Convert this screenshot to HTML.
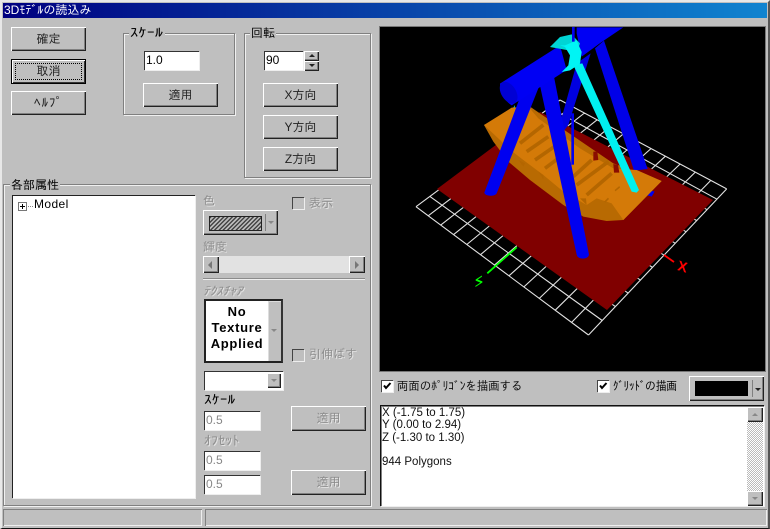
<!DOCTYPE html>
<html lang="ja"><head><meta charset="utf-8"><title>3Dモデルの読込み</title>
<style>
html,body{margin:0;padding:0;background:#bfbfbf;}
#w{position:relative;width:770px;height:529px;overflow:hidden;background:#bfbfbf;font:12px/14px "Liberation Sans","IPAGothic","Noto Sans CJK JP",sans-serif;color:#000;}
#w div{position:absolute;box-sizing:border-box;}
.fr{left:0;top:0;width:770px;height:529px;border-top:2px solid #e8e8e8;border-left:2px solid #e8e8e8;border-right:2px solid #555;border-bottom:1px solid #111;}
.tb{left:3px;top:3px;width:764px;height:15px;background:linear-gradient(90deg,#000080,#1084d0);color:#fff;line-height:15px;padding-left:1px;}
.b{background:#bfbfbf;box-shadow:inset 1px 1px 0 #fff,inset -1px -1px 0 #222,inset -2px -2px 0 #808080;text-align:center;line-height:24px;font-size:12px;color:#222;}
.dis{color:#8a8a8a;text-shadow:1px 1px 0 #e8e8e8;}
.gp{border:1px solid #808080;box-shadow:1px 1px 0 #f0f0f0,inset 1px 1px 0 #f0f0f0;}
.lb{background:#bfbfbf;padding:0 1px;line-height:14px;}
.ed{background:#fff;box-shadow:inset 1px 1px 0 #333,1px 1px 0 #eee;padding-left:2px;line-height:19px;}
.t{white-space:nowrap;line-height:14px;}
.g{color:#8e8e8e;text-shadow:1px 1px 0 #e4e4e4;}
.cb{width:12px;height:12px;box-shadow:inset 1px 1px 0 #444,1px 1px 0 #eee;}
.cw{background:#fff;}
.ar{width:0;height:0;border-left:3px solid transparent;border-right:3px solid transparent;border-top:3px solid #444;}
.ag{border-top-color:#888;}
.sx{transform-origin:0 50%;}
</style></head><body>
<div id="w">
<div class="fr"></div>
<div class="tb">3Dﾓﾃﾞﾙの読込み</div>

<div class="b" style="left:11px;top:27px;width:75px;height:24px">確定</div>
<div class="b" style="left:11px;top:59px;width:75px;height:25px;outline:1px solid #000;outline-offset:-1px;box-shadow:inset 2px 2px 0 #fff,inset -2px -2px 0 #333"><div style="left:4px;top:4px;right:4px;bottom:4px;border:1px dotted #000"></div>取消</div>
<div class="b" style="left:11px;top:91px;width:75px;height:24px;letter-spacing:1px;font-size:13px">ﾍﾙﾌﾟ</div>

<div class="gp" style="left:123px;top:33px;width:112px;height:82px"></div>
<div class="lb" style="left:129px;top:26px;width:36px;height:14px"></div>
<div class="t sx" style="left:130px;top:26px;font-size:13px;transform:scaleX(1.27)">ｽｹｰﾙ</div>
<div class="ed" style="left:144px;top:51px;width:55px;height:19px">1.0</div>
<div class="b" style="left:143px;top:83px;width:75px;height:24px">適用</div>

<div class="gp" style="left:244px;top:33px;width:127px;height:145px"></div>
<div class="lb" style="left:250px;top:26px">回転</div>
<div class="ed" style="left:264px;top:51px;width:39px;height:19px">90</div>
<div class="b" style="left:304px;top:51px;width:15px;height:10px"><div class="ar" style="left:5px;top:3px;border-top:0;border-bottom:3px solid #222"></div></div>
<div class="b" style="left:304px;top:61px;width:15px;height:10px"><div class="ar" style="left:5px;top:3px;border-top-color:#222"></div></div>
<div class="b" style="left:263px;top:83px;width:75px;height:24px">X方向</div>
<div class="b" style="left:263px;top:115px;width:75px;height:24px">Y方向</div>
<div class="b" style="left:263px;top:147px;width:75px;height:24px">Z方向</div>

<div class="gp" style="left:3px;top:184px;width:368px;height:322px"></div>
<div class="lb" style="left:10px;top:178px;font-size:12px">各部属性</div>

<div class="cw" style="left:12px;top:195px;width:183px;height:303px;box-shadow:inset 1px 1px 0 #222,1px 1px 0 #eee"></div>
<div style="left:18px;top:202px;width:9px;height:9px;border:1px solid #777;background:#fff"></div>
<div style="left:20px;top:206px;width:5px;height:1px;background:#000"></div>
<div style="left:22px;top:204px;width:1px;height:5px;background:#000"></div>
<div style="left:28px;top:206px;width:5px;border-top:1px dotted #888"></div>
<div class="t" style="left:34px;top:197px;letter-spacing:.4px">Model</div>

<div class="t g" style="left:203px;top:194px">色</div>
<div class="b" style="left:203px;top:210px;width:75px;height:25px"></div>
<div style="left:209px;top:216px;width:53px;height:15px;border:1px solid #222;background:repeating-linear-gradient(135deg,#444 0 1.4px,#bbb 1.4px 3px)"></div>
<div style="left:265px;top:214px;width:1px;height:17px;background:#808080"></div>
<div class="ar ag" style="left:268px;top:221px"></div>
<div class="cb" style="left:292px;top:197px"></div>
<div class="t g" style="left:309px;top:196px;font-size:12px">表示</div>

<div class="t g" style="left:203px;top:240px">輝度</div>
<div style="left:203px;top:256px;width:162px;height:17px;background:#e2e2e2"></div>
<div class="b" style="left:203px;top:256px;width:16px;height:17px"><div style="left:5px;top:5px;width:0;height:0;border-top:4px solid transparent;border-bottom:4px solid transparent;border-right:4px solid #777"></div></div>
<div class="b" style="left:349px;top:256px;width:16px;height:17px"><div style="left:6px;top:5px;width:0;height:0;border-top:4px solid transparent;border-bottom:4px solid transparent;border-left:4px solid #777"></div></div>
<div style="left:203px;top:278px;width:162px;height:2px;background:#8c8c8c;border-bottom:1px solid #eee"></div>
<div class="t g sx" style="left:203px;top:284px;font-size:12px;font-style:italic;transform:scaleX(1.1)">ﾃｸｽﾁｬｱ</div>

<div class="cw" style="left:204px;top:299px;width:79px;height:64px;border:2px solid #222;border-right-color:#333"></div>
<div class="b" style="left:268px;top:301px;width:13px;height:60px;box-shadow:inset 1px 1px 0 #ddd"><div class="ar ag" style="left:3px;top:28px"></div></div>
<div class="t" style="left:206px;top:304px;width:62px;text-align:center;font-weight:bold;font-size:13px;letter-spacing:.7px;line-height:16px">No<br>Texture<br>Applied</div>
<div class="cb" style="left:292px;top:349px"></div>
<div class="t g" style="left:309px;top:347px;font-size:12px">引伸ばす</div>

<div class="ed" style="left:204px;top:371px;width:79px;height:19px"></div>
<div class="b" style="left:267px;top:373px;width:14px;height:15px"><div class="ar ag" style="left:4px;top:6px"></div></div>
<div class="t sx" style="left:204px;top:393px;font-size:13px;transform:scaleX(1.2)">ｽｹｰﾙ</div>
<div class="ed" style="left:204px;top:411px;width:56px;height:19px;color:#888">0.5</div>
<div class="b dis" style="left:291px;top:406px;width:75px;height:25px">適用</div>
<div class="t g sx" style="left:204px;top:434px;font-size:13px;transform:scaleX(1.08)">ｵﾌｾｯﾄ</div>
<div class="ed" style="left:204px;top:451px;width:56px;height:19px;color:#888">0.5</div>
<div class="ed" style="left:204px;top:475px;width:56px;height:19px;color:#888">0.5</div>
<div class="b dis" style="left:291px;top:470px;width:75px;height:25px">適用</div>

<div style="left:379px;top:26px;width:387px;height:346px;background:#000;box-shadow:inset 0 0 0 1px #777"></div>
<svg style="position:absolute;left:380px;top:27px" width="385" height="344" viewBox="380 27 385 344" xmlns="http://www.w3.org/2000/svg">
<path fill="none" stroke="#e2e2e2" stroke-width="1.1" d="M416 206.7L560 100M428.2 215.8L572.1 106.4M440.7 225.1L584.5 113M453.6 234.6L597.1 119.8M466.8 244.5L610.1 126.7M480.5 254.7L623.4 133.8M494.5 265.1L637.1 141.1M509 275.8L651.1 148.5M523.9 286.9L665.4 156.2M539.3 298.4L680.1 164M555.2 310.2L695.3 172.1M571.6 322.4L710.8 180.4M588.5 335L726.7 188.9M416 206.7L588.5 335M429.9 196.4L602.2 320.5M443.3 186.4L615.4 306.6M456.4 176.7L628.1 293.1M469.2 167.3L640.5 280.1M481.6 158.1L652.5 267.4M493.7 149.1L664.1 255.2M505.5 140.4L675.3 243.3M516.9 131.9L686.2 231.8M528.1 123.6L696.8 220.6M539 115.5L707.1 209.7M549.6 107.7L717 199.2M560 100L726.7 188.9"/>
<path fill="#800000" d="M437 189L540 112L713 200L607 310Z"/>
<path fill="none" stroke="#00ff00" stroke-width="1.8" d="M516.7 247.3L487.3 273.3"/>
<text transform="matrix(-1.26 .82 0 1.06 482.7 282.3)" font-family="Liberation Sans" font-weight="bold" font-size="10" fill="#00ff00">Z</text>
<path fill="none" stroke="#ff0000" stroke-width="1.8" d="M664 255L674 262"/>
<text transform="matrix(1 .3 -.2 1 677 270)" font-family="Liberation Sans" font-weight="bold" font-size="14" fill="#ff0000">X</text>
<g transform="translate(380 20) scale(.33333)">
<path fill="#0000e8" d="M645 85L672 62L803 447L762 452Z"/>
<path fill="#0000f0" d="M805 510L824 515L815 530L802 526Z"/>
<path fill="#00d8d8" d="M382 290L405 255L402 285L392 295Z"/>
<path fill="#b86a02" d="M312 315L340 365L385 425L450 480L550 555L610 590L680 603L730 600L845 483L700 430L450 260Z"/>
<path fill="#d47a08" d="M312 315L395 263L445 260L475 295L600 385L700 445L770 450L845 483L730 600L695 550L650 535L620 555L550 515L490 465L430 420L385 385L360 360Z"/>
<g fill="none" stroke="#b46600" stroke-width="11">
<path d="M420 370L490 315"/>
<path d="M440 395L505 350"/>
<path d="M465 420L530 375"/>
<path d="M495 445L555 400"/>
<path d="M580 470L635 420"/>
<path d="M590 495L685 425"/>
<path d="M620 525L695 460"/>
</g>
<g fill="#b46600">
<path d="M415 420L435 430L430 440Z"/>
<path d="M475 455L490 465L490 478Z"/>
<path d="M600 535L620 555L618 535Z"/>
<path d="M704 510L718 498L720 503L706 514Z"/>
<path d="M672 545L684 533L687 537L676 548Z"/>
</g>
<g fill="#8a0d00">
<path d="M640 395L652 395L655 420L640 422Z"/>
<path d="M700 432L714 435L718 458L702 458Z"/>
</g>
<path fill="#0000e0" d="M590 130L632 100L565 315L550 335L537 322Z"/>
<path d="M578 280L578 434" stroke="#0000f0" stroke-width="8" fill="none"/>
<path fill="#00f0f0" d="M580 135L607 130L777 510L770 518L755 515Z"/>
<path fill="#0000f0" d="M432 200L477 200L350 520C345 530 315 530 313 518Z"/>
<path fill="#0000f0" d="M472 160L520 160L627 704C625 720 592 720 590 704Z"/>
<path fill="#0000f4" d="M590 40L590 22L730 22L665 66L605 110Z"/>
<path fill="#0000f4" d="M360 191L540 76L560 150L395 256C375 245 360 215 360 191Z"/>
<ellipse cx="386" cy="218" rx="36" ry="22" fill="#0000d4" transform="rotate(58 386 218)"/>
<path fill="#00d4d4" d="M510 81L540 51L575 43L600 70L590 100L560 90Z"/>
<path fill="#00f4f4" d="M540 76L555 76L590 61L605 96L600 131L570 151L545 156L565 136L570 106L555 81Z"/>
<path d="M580 21L580 65" stroke="#0000f0" stroke-width="8" fill="none"/>
</g>
</svg>

<div class="cb cw" style="left:381px;top:380px"></div>
<svg style="position:absolute;left:381px;top:380px" width="12" height="12" xmlns="http://www.w3.org/2000/svg"><path d="M3 5.5L5 8L9.5 3" fill="none" stroke="#000" stroke-width="2"/></svg>
<div class="t sx" style="left:397px;top:379px;font-size:12px;color:#111;transform:scaleX(.95)">両面のﾎﾟﾘｺﾞﾝを描画する</div>
<div class="cb cw" style="left:597px;top:380px"></div>
<svg style="position:absolute;left:597px;top:380px" width="12" height="12" xmlns="http://www.w3.org/2000/svg"><path d="M3 5.5L5 8L9.5 3" fill="none" stroke="#000" stroke-width="2"/></svg>
<div class="t sx" style="left:613px;top:379px;font-size:12px;transform:scaleX(.89)">ｸﾞﾘｯﾄﾞの描画</div>
<div class="b" style="left:689px;top:376px;width:75px;height:25px"></div>
<div style="left:695px;top:381px;width:53px;height:15px;background:#000"></div>
<div style="left:752px;top:380px;width:1px;height:17px;background:#808080"></div>
<div class="ar" style="left:755px;top:388px;border-top-color:#222"></div>

<div class="cw" style="left:380px;top:405px;width:384px;height:101px;box-shadow:inset 1px 1px 0 #111,inset 2px 2px 0 #808080,1px 1px 0 #eee"></div>
<div style="left:747px;top:407px;width:16px;height:98px;background:repeating-conic-gradient(#bbb 0 25%,#fff 0 50%) 0 0/2px 2px"></div>
<div class="b" style="left:747px;top:407px;width:16px;height:15px"><div class="ar ag" style="left:5px;top:6px;border-top:0;border-bottom:3px solid #888"></div></div>
<div class="b" style="left:747px;top:491px;width:16px;height:15px"><div class="ar ag" style="left:5px;top:6px"></div></div>
<div class="t" style="left:382px;top:407px;line-height:12.3px;font-size:11.5px;color:#111">X (-1.75 to 1.75)<br>Y (0.00 to 2.94)<br>Z (-1.30 to 1.30)<br><br>944 Polygons</div>

<div style="left:3px;top:509px;width:199px;height:17px;box-shadow:inset 1px 1px 0 #808080,inset -1px -1px 0 #eee"></div>
<div style="left:205px;top:509px;width:562px;height:17px;box-shadow:inset 1px 1px 0 #808080,inset -1px -1px 0 #eee"></div>
</div>
</body></html>
